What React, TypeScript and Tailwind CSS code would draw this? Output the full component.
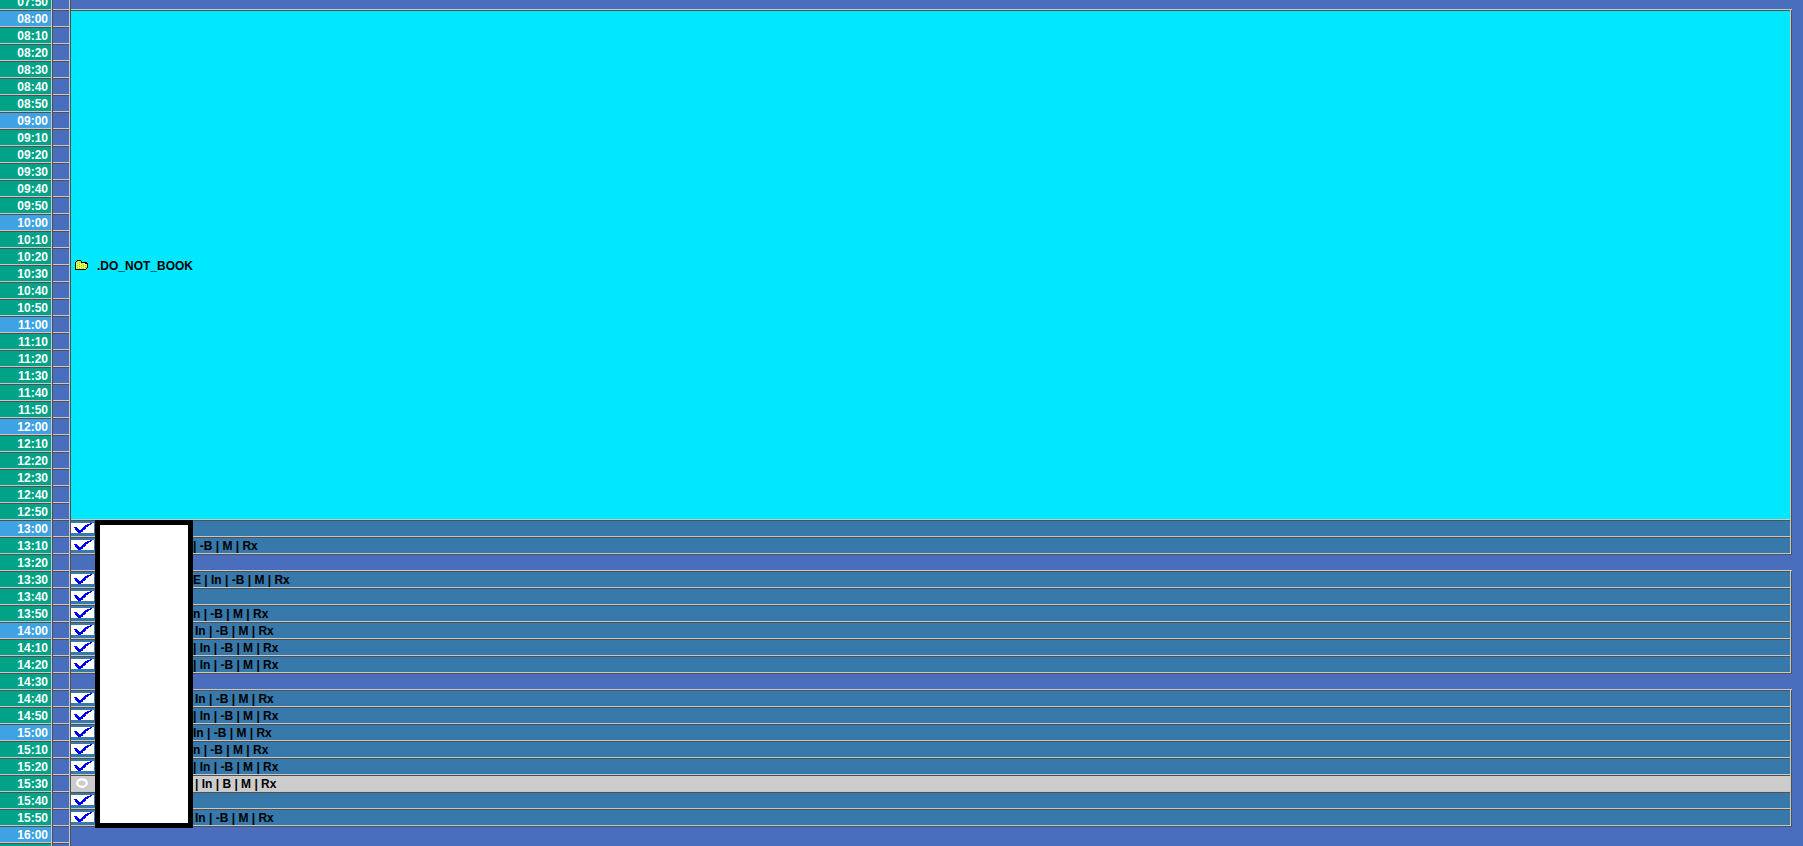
import React from "react";

type Status = "done" | "waiting" | "free";
interface Slot {
  time: string;
  status: Status;
  pad?: string;
  note?: string;
}

const REST = "-B | M | Rx";

const SLOTS: Slot[] = [
  { time: "13:00", status: "done" },
  { time: "13:10", status: "done", note: `| ${REST}` },
  { time: "13:20", status: "free" },
  { time: "13:30", status: "done", note: `E | In | ${REST}` },
  { time: "13:40", status: "done" },
  { time: "13:50", status: "done", note: `n | ${REST}` },
  { time: "14:00", status: "done", pad: "pl-0.5", note: `In | ${REST}` },
  { time: "14:10", status: "done", note: `| In | ${REST}` },
  { time: "14:20", status: "done", note: `| In | ${REST}` },
  { time: "14:30", status: "free" },
  { time: "14:40", status: "done", pad: "pl-0.5", note: `In | ${REST}` },
  { time: "14:50", status: "done", note: `| In | ${REST}` },
  { time: "15:00", status: "done", note: `In | ${REST}` },
  { time: "15:10", status: "done", note: `n | ${REST}` },
  { time: "15:20", status: "done", note: `| In | ${REST}` },
  { time: "15:30", status: "waiting", pad: "pl-0.5", note: "| In | B | M | Rx" },
  { time: "15:40", status: "done" },
  { time: "15:50", status: "done", pad: "pl-0.5", note: `In | ${REST}` },
];

const pad2 = (n: number) => String(n).padStart(2, "0");
const TIMES = Array.from({ length: 51 }, (_, i) => {
  const minutes = 7 * 60 + 50 + i * 10;
  return `${pad2(Math.floor(minutes / 60))}:${pad2(minutes % 60)}`;
});

function TimeColumn() {
  return (
    <ol className="-mt-[7px] w-[53px] shrink-0">
      {TIMES.map((time) => (
        <li key={time} className="flex h-[17px]">
          <time
            className={`w-full border-t border-b border-t-[#505050] border-b-[#c8c8c8] pr-[3px] text-right leading-[17px] text-white ${
              time.endsWith("00") ? "bg-[#3ea2e3]" : "bg-[#00a388]"
            }`}
          >
            {time}
          </time>
          <span className="w-[2px] shrink-0 border-l border-[#c8c8c8] bg-[#505050]" />
        </li>
      ))}
    </ol>
  );
}

function MarkerColumn() {
  return (
    <div className="-mt-[7px] flex w-[18px] shrink-0">
      <div className="grow">
        {TIMES.map((time) => (
          <div key={time} className="h-[17px] border-t border-b border-t-[#505050] border-b-[#c8c8c8]" />
        ))}
      </div>
      <div className="w-[2px] border-l border-[#c8c8c8] bg-[#505050]" />
    </div>
  );
}

function CheckIcon() {
  return (
    <svg width="23" height="10" viewBox="0 0 23 10" shapeRendering="crispEdges" className="bg-white">
      <path
        d="M19 0h2v1h-2zM16 1h4v1h-4zM14 2h4v1h-4zM13 3h4v1h-4zM3 4h3v1H3zM12 4h3v1h-3zM4 5h3v1H4zM11 5h4v1h-4zM4 6h4v1H4zM10 6h4v1h-4zM5 7h7v1H5zM6 8h6v1H6zM7 9h3v1H7z"
        fill="#0000f0"
      />
    </svg>
  );
}

function CircleIcon() {
  return (
    <svg width="23" height="10" viewBox="0 0 23 10">
      <ellipse cx="11" cy="5" rx="4.75" ry="3.75" fill="none" stroke="#fff" strokeWidth="2.25" />
    </svg>
  );
}

function FolderIcon() {
  return (
    <svg width="14" height="10" viewBox="0 0 14 10" shapeRendering="crispEdges">
      <defs>
        <pattern id="folder-dots" width="4" height="2" patternUnits="userSpaceOnUse">
          <rect width="4" height="2" fill="#ffff30" />
          <path d="M0 0h1v1H0zM2 1h1v1H2z" fill="#50e0b0" />
        </pattern>
      </defs>
      <path d="M1 1h4v1h6v1h1v4h-1v2H1z" fill="url(#folder-dots)" />
      <path
        d="M2 0h4v1H2zM1 1h1v1H1zM0 2h1v8H0zM6 1h1v1H6zM6 2h6v1H6zM10 3h3v1h-3zM12 4h1v4h-1zM11 8h1v1h-1zM1 9h10v1H1z"
        fill="#000"
      />
    </svg>
  );
}

function SlotRow({ slot }: { slot: Slot }) {
  if (slot.status === "free") {
    return <li className="h-[17px] border-t border-b border-t-[#505050] border-b-[#c8c8c8]" />;
  }
  const waiting = slot.status === "waiting";
  return (
    <li className="flex h-[17px]">
      <div
        className={`flex grow items-start border-t border-b border-t-[#505050] border-b-[#c8c8c8] ${
          waiting ? "bg-[#cccccc]" : "bg-[#3779ab]"
        }`}
      >
        <span className="flex w-[122px] shrink-0 pt-0.5">{waiting ? <CircleIcon /> : <CheckIcon />}</span>
        <span className={`whitespace-pre leading-[17px] ${slot.pad ?? ""}`}>{slot.note}</span>
      </div>
      <span className="w-[2px] shrink-0 border-l border-[#c8c8c8] bg-[#505050]" />
    </li>
  );
}

export default function App() {
  return (
    <main className="flex h-screen overflow-hidden bg-[#496ebe] font-['Liberation_Sans',Arial,sans-serif] text-[12px] font-bold text-black">
      <TimeColumn />
      <MarkerColumn />
      <section className="mr-[11px] grow pt-[9px]">
        <div className="flex h-[511px] border-t border-[#c8c8c8]">
          <div className="flex grow items-center gap-2 border-t border-b border-t-[#505050] border-b-[#c8c8c8] bg-[#00e8ff] pl-1">
            <FolderIcon />
            <span className="pt-0.5">.DO_NOT_BOOK</span>
          </div>
          <span className="w-[2px] shrink-0 border-l border-[#c8c8c8] bg-[#505050]" />
        </div>
        <div className="relative">
          <ul className="border-b border-[#505050]">
            {SLOTS.map((slot) => (
              <SlotRow key={slot.time} slot={slot} />
            ))}
          </ul>
          <div className="absolute top-0 left-6 h-[308px] w-[98px] border-5 border-black bg-white" />
        </div>
      </section>
    </main>
  );
}
